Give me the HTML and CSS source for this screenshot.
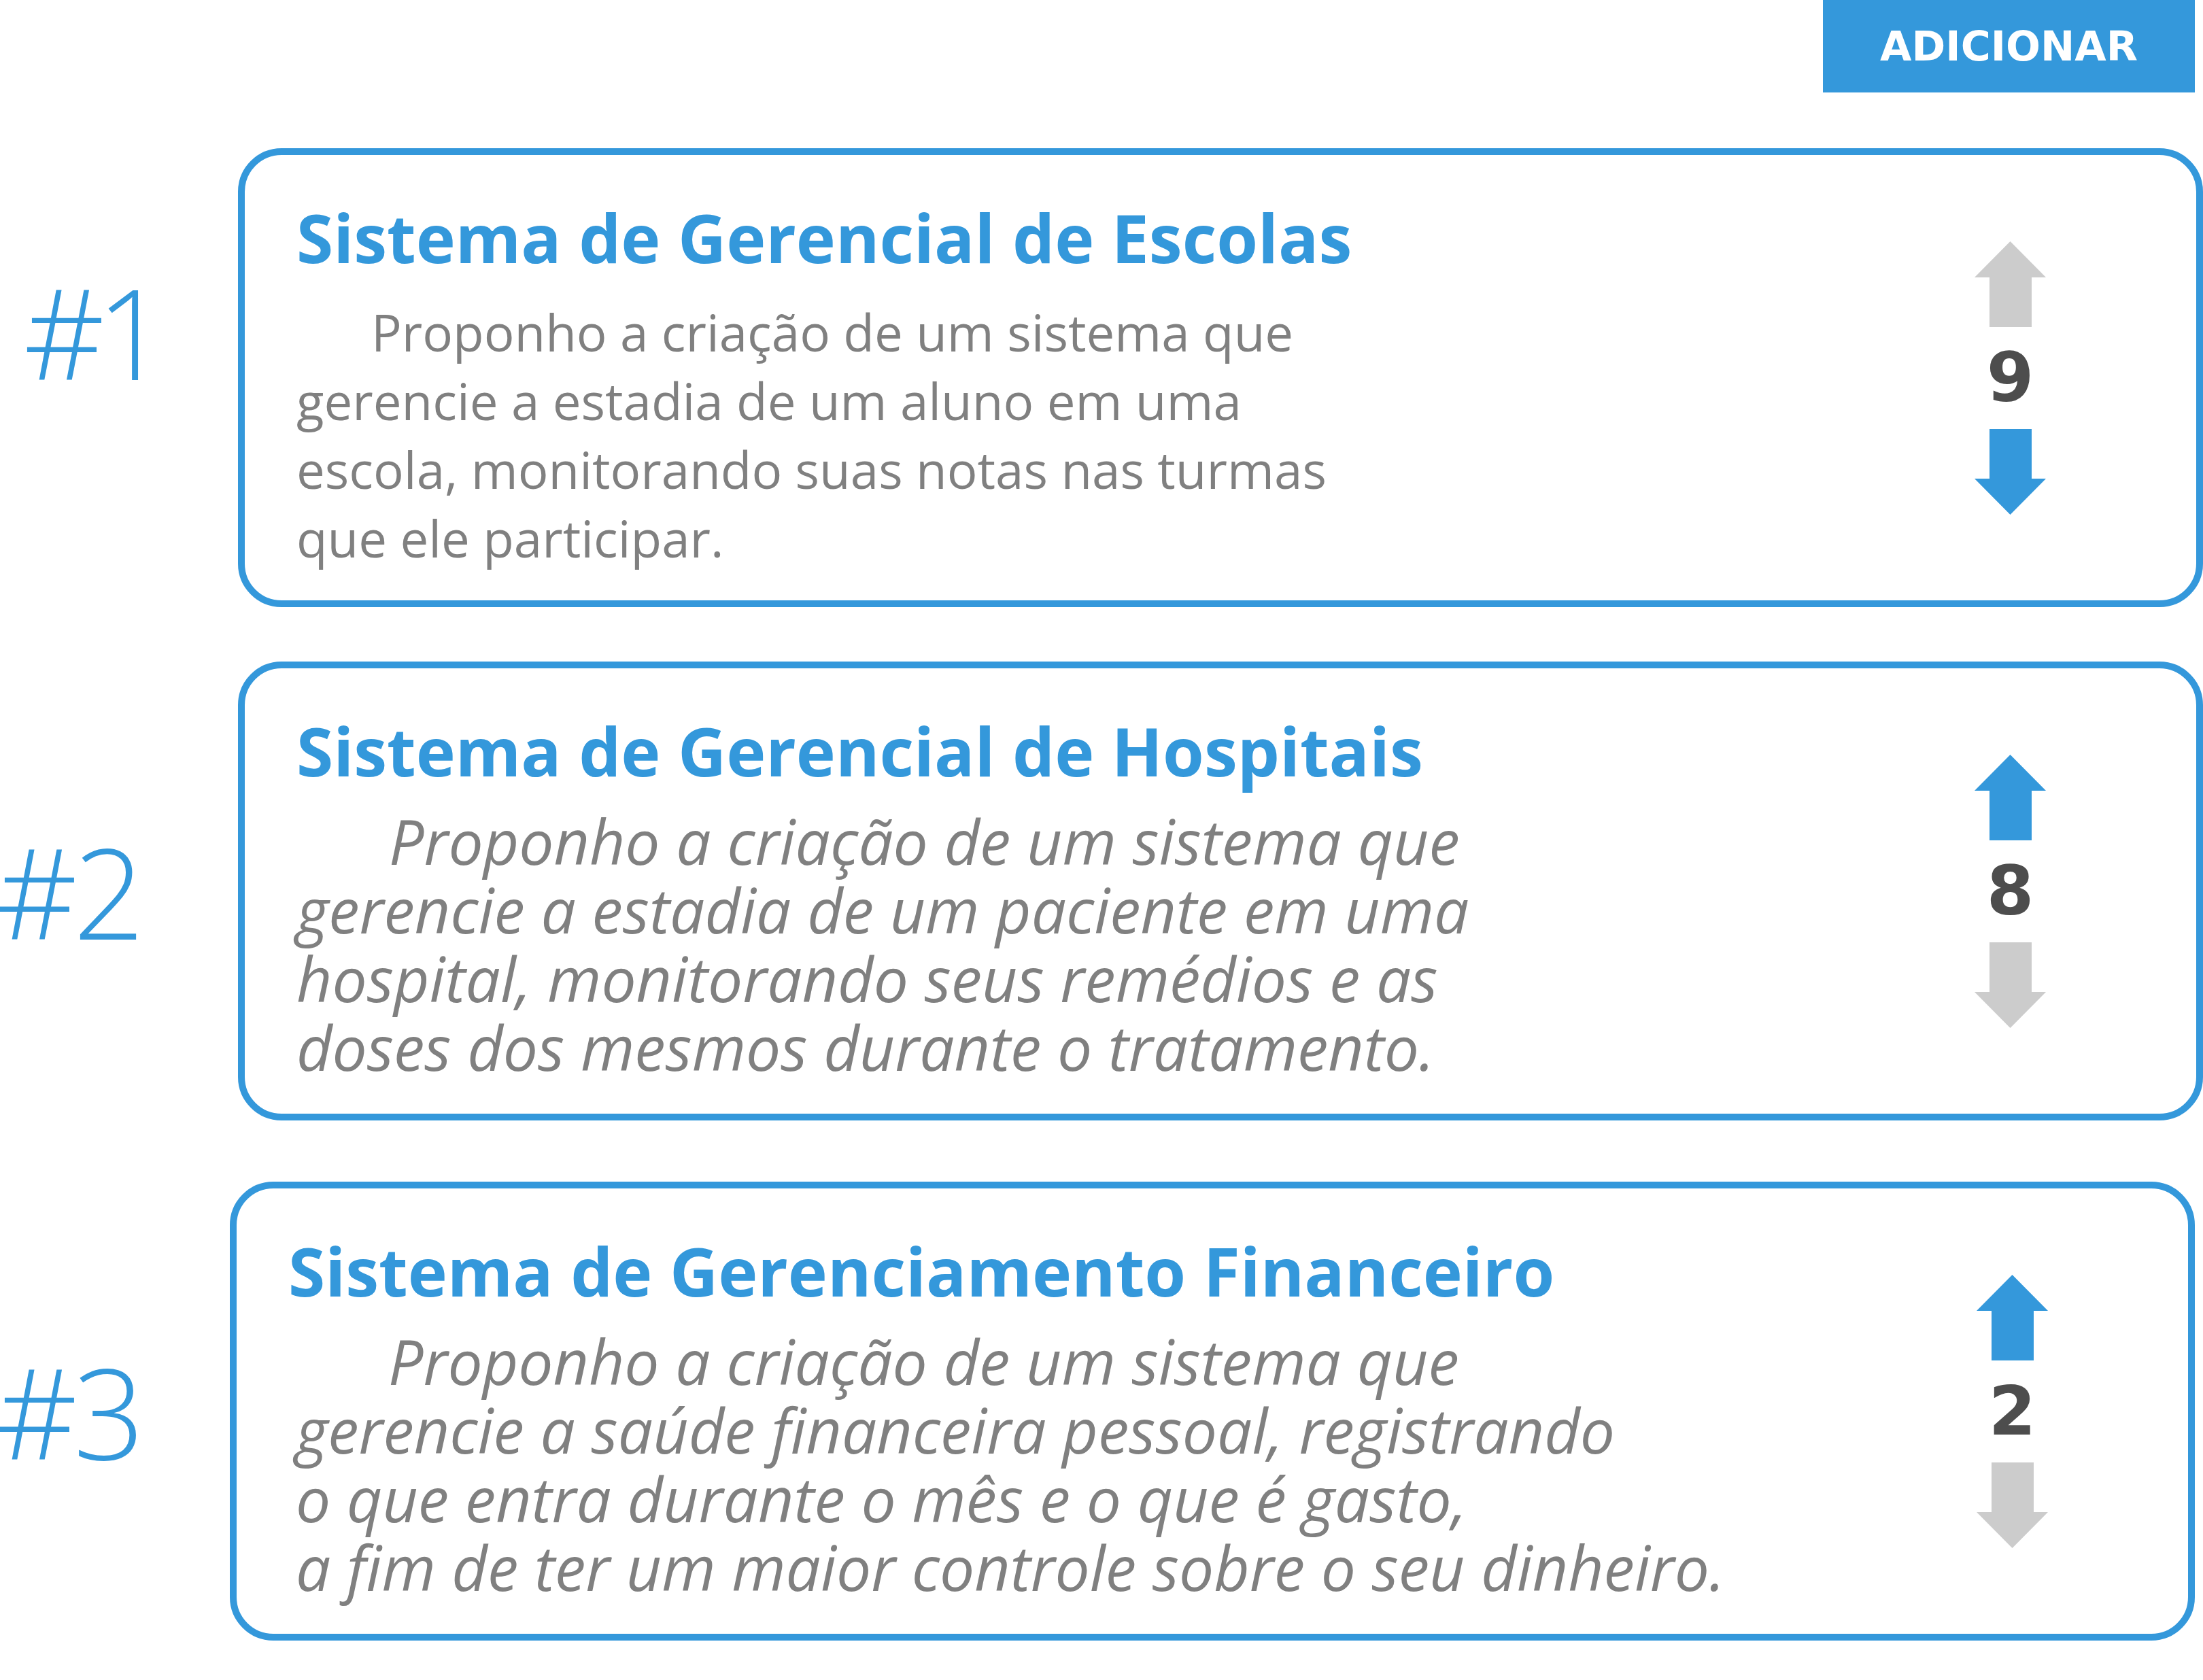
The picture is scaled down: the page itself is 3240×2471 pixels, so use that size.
FILE: index.html
```html
<!DOCTYPE html>
<html lang="pt-BR">
<head>
<meta charset="utf-8">
<title>Ranking de propostas</title>
<link rel="stylesheet" href="styles.css">
</head>
<body>
<header class="toolbar">
  <button class="btn-add" type="button">ADICIONAR</button>
</header>
<main class="ranking">
  <section class="entry entry--first">
    <div class="rank rank--first">#1</div>
    <article class="card">
      <div class="card-body">
        <h2 class="card-title">Sistema de Gerencial de Escolas</h2>
        <p class="card-text">Proponho a criação de um sistema que<br>gerencie a estadia de um aluno em uma<br>escola, monitorando suas notas nas turmas<br>que ele participar.</p>
      </div>
      <div class="vote">
        <svg class="arrow arrow--off" viewBox="0 0 105 126"><polygon points="52.5,0 105,53 84,53 84,126 22,126 22,53 0,53"/></svg>
        <span class="score">9</span>
        <svg class="arrow arrow--on" viewBox="0 0 105 126"><polygon points="22,0 84,0 84,73 105,73 52.5,126 0,73 22,73"/></svg>
      </div>
    </article>
  </section>
  <section class="entry entry--second">
    <div class="rank">#2</div>
    <article class="card">
      <div class="card-body">
        <h2 class="card-title">Sistema de Gerencial de Hospitais</h2>
        <p class="card-text card-text--italic">Proponho a criação de um sistema que<br>gerencie a estadia de um paciente em uma<br>hospital, monitorando seus remédios e as<br>doses dos mesmos durante o tratamento.</p>
      </div>
      <div class="vote">
        <svg class="arrow arrow--on" viewBox="0 0 105 126"><polygon points="52.5,0 105,53 84,53 84,126 22,126 22,53 0,53"/></svg>
        <span class="score">8</span>
        <svg class="arrow arrow--off" viewBox="0 0 105 126"><polygon points="22,0 84,0 84,73 105,73 52.5,126 0,73 22,73"/></svg>
      </div>
    </article>
  </section>
  <section class="entry entry--third">
    <div class="rank">#3</div>
    <article class="card">
      <div class="card-body">
        <h2 class="card-title">Sistema de Gerenciamento Financeiro</h2>
        <p class="card-text card-text--italic">Proponho a criação de um sistema que<br>gerencie a saúde financeira pessoal, registrando<br>o que entra durante o mês e o que é gasto,<br>a fim de ter um maior controle sobre o seu dinheiro.</p>
      </div>
      <div class="vote">
        <svg class="arrow arrow--on" viewBox="0 0 105 126"><polygon points="52.5,0 105,53 84,53 84,126 22,126 22,53 0,53"/></svg>
        <span class="score">2</span>
        <svg class="arrow arrow--off" viewBox="0 0 105 126"><polygon points="22,0 84,0 84,73 105,73 52.5,126 0,73 22,73"/></svg>
      </div>
    </article>
  </section>
</main>
</body>
</html>
```
FILE: styles.css
```css
* { box-sizing: border-box; }
html, body { margin: 0; background: #ffffff; }
body {
  width: 3240px;
  height: 2471px;
  overflow: hidden;
  font-family: "Segoe UI", "Open Sans", sans-serif;
}
.toolbar {
  display: flex;
  justify-content: flex-end;
  padding-right: 12px;
  height: 136px;
}
.btn-add {
  width: 547px;
  height: 136px;
  padding: 0;
  border: 0;
  background: #3498db;
  color: #ffffff;
  font: 700 60px/1 "DejaVu Sans", sans-serif;
}
.ranking {
  display: flex;
  flex-direction: column;
}
.entry {
  display: grid;
  grid-template-columns: 350px 2890px;
  align-items: center;
  margin-top: 80px;
}
.entry--first { margin-top: 82px; }
.entry--third { margin-top: 90px; }
.rank {
  margin-left: -5px;
  font-family: "Open Sans", sans-serif;
  font-weight: 300;
  font-size: 184px;
  letter-spacing: -6px;
  line-height: 1;
  color: #3498db;
}
.rank--first {
  padding-left: 40px;
  margin-bottom: 136px;
  letter-spacing: -12px;
}
.card {
  height: 675px;
  display: flex;
  padding: 0 221px 0 76px;
  border: 10px solid #3498db;
  border-radius: 64px;
}
.entry--third .card {
  margin-left: -12px;
  margin-right: 12px;
  padding-right: 206px;
}
.card-body {
  flex: 1;
  padding-top: 61px;
}
.card-title {
  margin: 0 0 29px;
  font-size: 98.3px;
  font-weight: 700;
  line-height: 120px;
  color: #3498db;
}
.card-text {
  margin: 0;
  font-size: 74.5px;
  line-height: 101px;
  color: #808080;
  text-indent: 110px;
}
.card-text--italic {
  margin-top: -6px;
  font-style: italic;
  font-size: 91px;
  text-indent: 136px;
}
.entry--third .card-text {
  padding-left: 11px;
}
.vote {
  align-self: center;
  width: 105px;
  display: flex;
  flex-direction: column;
  align-items: center;
}
.arrow {
  display: block;
  width: 105px;
  height: 126px;
}
.arrow--on { fill: #3498db; }
.arrow--off { fill: #cccccc; }
.score {
  margin: 38px 0;
  font: 700 100px/74px "DejaVu Sans", sans-serif;
  color: #4d4d4d;
}
```
